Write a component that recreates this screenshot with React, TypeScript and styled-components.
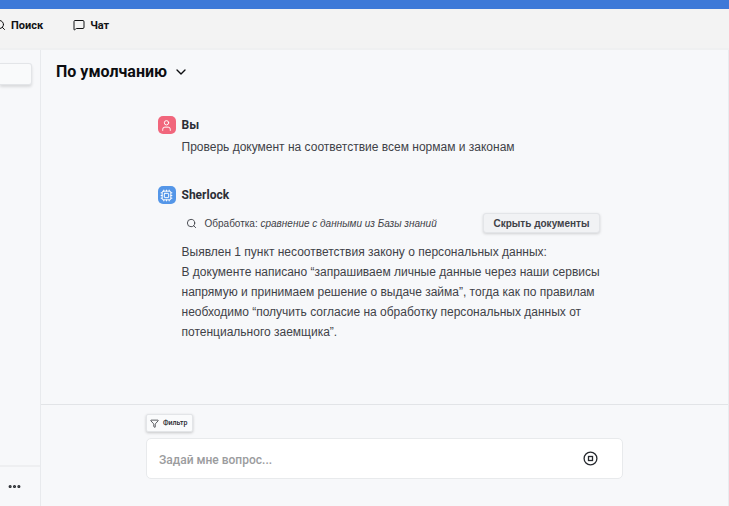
import React from "react";
import styled, { createGlobalStyle } from "styled-components";
import {
  ChevronDown,
  Cpu,
  Ellipsis,
  Filter,
  MessageSquare,
  Search,
  User,
} from "lucide-react";

const GlobalStyle = createGlobalStyle`
  * { box-sizing: border-box; }
  body {
    margin: 0;
    background: #f7f8fa;
    color: #3f4248;
    font-family: Roboto, "Liberation Sans", sans-serif;
  }
  button, input { font: inherit; color: inherit; }
  h1, h2, p { margin: 0; }
`;

const Page = styled.div`
  display: flex;
  flex-direction: column;
  min-height: 100vh;
  overflow-x: hidden;
`;

const Accent = styled.div`
  height: 9px;
  background: #3d79d8;
`;

const TopBar = styled.nav`
  display: flex;
  align-items: flex-start;
  gap: 30px;
  height: 39px;
  padding-top: 6px;
  margin-left: -6px;
  background: #f3f3f3;
`;

const NavLink = styled.a`
  display: flex;
  align-items: center;
  gap: 5px;
  height: 20px;
  color: #111214;
  font-size: 11px;
  font-weight: 700;
  text-decoration: none;
`;

const Body = styled.div`
  display: flex;
  flex: 1;
  border-top: 2px solid #eff0f1;
`;

const Sidebar = styled.aside`
  display: flex;
  flex-direction: column;
  justify-content: space-between;
  width: 41px;
  padding-top: 13px;
  border-right: 1px solid #e8eaed;
`;

const SidebarField = styled.button`
  width: 32px;
  height: 22px;
  padding: 0;
  background: #f9fafb;
  border: 1px solid #e3e5e8;
  border-left: 0;
  border-radius: 0 3px 3px 0;
  box-shadow: 0 2px 3px rgba(0, 0, 0, 0.12);
`;

const SidebarFooter = styled.div`
  height: 41px;
  padding: 12px 0 0 7px;
  border-top: 2px solid #eeeff1;
`;

const IconButton = styled.button`
  display: flex;
  padding: 0;
  background: none;
  border: 0;
  color: #25282d;
`;

const Main = styled.main`
  display: flex;
  flex: 1;
  flex-direction: column;
  min-width: 0;
  border-right: 1px solid #e9ebee;
`;

const TitleButton = styled.button`
  display: flex;
  align-items: center;
  gap: 6px;
  height: 44px;
  padding: 0 15px;
  background: none;
  border: 0;
  color: #0c0d10;
`;

const Title = styled.h1`
  font-size: 16px;
  line-height: 20px;
`;

const Conversation = styled.section`
  display: flex;
  flex: 1;
  flex-direction: column;
  gap: 29px;
  width: 100%;
  max-width: 476px;
  margin: 0 auto;
  padding: 22px 12px 0 11px;
`;

const Message = styled.article`
  display: flex;
  flex-direction: column;
`;

const Author = styled.header`
  display: flex;
  align-items: center;
  gap: 6px;
  height: 18px;
`;

const Avatar = styled.span<{ $color: string }>`
  display: grid;
  place-items: center;
  width: 18px;
  height: 18px;
  background: ${(p) => p.$color};
  border-radius: 5px;
  color: #fff;
`;

const Name = styled.h2`
  color: #2b2e36;
  font-size: 12px;
  font-weight: 700;
`;

const Text = styled.p`
  padding-left: 24px;
  font-family: "Liberation Sans", Arial, sans-serif;
  font-size: 12px;
  line-height: 20px;
  white-space: pre-line;
`;

const Question = styled(Text)`
  margin-top: 3px;
`;

const Process = styled.div`
  display: flex;
  align-items: center;
  gap: 8px;
  height: 20px;
  margin: 9px 11px 9px 28px;
  font-family: "Liberation Sans", Arial, sans-serif;
  font-size: 10px;
`;

const HideButton = styled.button`
  height: 20px;
  margin-left: auto;
  padding: 0 9px;
  background: #f1f2f4;
  border: 1px solid #e3e5e8;
  border-radius: 3px;
  box-shadow: 0 1px 3px rgba(0, 0, 0, 0.16);
  font-size: 10px;
  font-weight: 700;
`;

const Composer = styled.footer`
  height: 102px;
  padding-top: 9px;
  border-top: 1px solid #e2e4e7;
`;

const ComposerInner = styled.form`
  display: flex;
  flex-direction: column;
  align-items: flex-start;
  gap: 6px;
  width: 100%;
  max-width: 477px;
  margin: 0 auto;
`;

const FilterButton = styled.button`
  display: flex;
  align-items: center;
  gap: 4px;
  height: 18px;
  padding: 0 4px 0 3px;
  background: #fafbfc;
  border: 1px solid #e3e5e8;
  border-radius: 2px;
  box-shadow: 0 1px 3px rgba(0, 0, 0, 0.2);
  color: #25282d;
  font-size: 7px;
  font-weight: 500;
`;

const InputBox = styled.div`
  display: flex;
  align-items: center;
  width: 100%;
  height: 41px;
  padding: 0 24px 0 12px;
  background: #fff;
  border: 1px solid #e8eaec;
  border-radius: 5px;
`;

const QuestionInput = styled.input`
  flex: 1;
  min-width: 0;
  padding: 2px 0 0;
  background: none;
  border: 0;
  outline: 0;
  font-size: 12px;
  font-weight: 500;
  &::placeholder { color: #9b9c9e; opacity: 1; }
`;

const StopIcon = () => (
  <svg width="15" height="15" viewBox="0 0 15 15" fill="none" stroke="currentColor">
    <circle cx="7.5" cy="7.5" r="6.4" strokeWidth="1.3" />
    <rect x="5.5" y="5.5" width="4" height="4" strokeWidth="1.3" />
  </svg>
);

export default function App() {
  return (
    <>
      <GlobalStyle />
      <Page>
        <Accent />
        <TopBar>
          <NavLink href="#search">
            <Search size={12} />
            Поиск
          </NavLink>
          <NavLink href="#chat">
            <MessageSquare size={12} />
            Чат
          </NavLink>
        </TopBar>
        <Body>
          <Sidebar>
            <SidebarField type="button" aria-label="Новый чат" />
            <SidebarFooter>
              <IconButton type="button" aria-label="Ещё">
                <Ellipsis size={15} strokeWidth={3} />
              </IconButton>
            </SidebarFooter>
          </Sidebar>
          <Main>
            <TitleButton type="button">
              <Title>По умолчанию</Title>
              <ChevronDown size={16} />
            </TitleButton>
            <Conversation>
              <Message>
                <Author>
                  <Avatar $color="#f1667c">
                    <User size={13} strokeWidth={1.8} />
                  </Avatar>
                  <Name>Вы</Name>
                </Author>
                <Question>Проверь документ на соответствие всем нормам и законам</Question>
              </Message>
              <Message>
                <Author>
                  <Avatar $color="#5496e8">
                    <Cpu size={13} strokeWidth={1.8} />
                  </Avatar>
                  <Name>Sherlock</Name>
                </Author>
                <Process>
                  <Search size={11} />
                  <span>
                    Обработка: <em>сравнение с данными из Базы знаний</em>
                  </span>
                  <HideButton type="button">Скрыть документы</HideButton>
                </Process>
                <Text>
                  {`Выявлен 1 пункт несоответствия закону о персональных данных:
В документе написано “запрашиваем личные данные через наши сервисы
напрямую и принимаем решение о выдаче займа”, тогда как по правилам
необходимо “получить согласие на обработку персональных данных от
потенциального заемщика”.`}
                </Text>
              </Message>
            </Conversation>
            <Composer>
              <ComposerInner>
                <FilterButton type="button">
                  <Filter size={9} />
                  Фильтр
                </FilterButton>
                <InputBox>
                  <QuestionInput aria-label="Вопрос" placeholder="Задай мне вопрос..." />
                  <IconButton type="button" aria-label="Остановить">
                    <StopIcon />
                  </IconButton>
                </InputBox>
              </ComposerInner>
            </Composer>
          </Main>
        </Body>
      </Page>
    </>
  );
}
